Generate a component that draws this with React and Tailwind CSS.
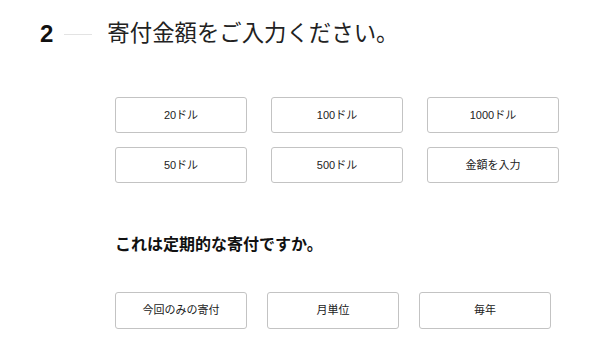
const amounts = ['20ドル', '100ドル', '1000ドル', '50ドル', '500ドル', '金額を入力']
const freqs = ['今回のみの寄付', '月単位', '毎年']

const font = { fontFamily: '"Liberation Sans", "Noto Sans CJK JP", sans-serif' }

function Choice({ label, tall }) {
  return (
    <button
      className={`flex w-[132px] items-center justify-center rounded-[3px] border border-[#c3c3c3] bg-white text-[11px] text-[#222] ${
        tall ? 'h-[37px]' : 'h-[36px]'
      }`}
    >
      {label}
    </button>
  )
}

export default function App() {
  return (
    <div className="min-h-[352px] bg-white px-[40px] pt-[20px]" style={font}>
      <div className="flex h-[28px] items-center">
        <span className="text-[24px] font-bold leading-none text-[#111]">2</span>
        <span className="ml-[11px] h-px w-[28px] bg-[#e3e3e3]" />
        <h1 className="ml-[15px] text-[22.4px] font-normal leading-none text-[#222]">寄付金額をご入力ください。</h1>
      </div>

      <div className="ml-[75px]">
        <div className="mt-[49px] grid grid-cols-[132px_132px_132px] gap-x-[24px] gap-y-[14px]">
          {amounts.map((a) => (
            <Choice key={a} label={a} />
          ))}
        </div>

        <h2 className="mt-[50px] h-[24px] text-[16px] font-semibold leading-[24px] text-[#111]">
          これは定期的な寄付ですか。
        </h2>

        <div className="mt-[35px] flex gap-[20px]">
          {freqs.map((f) => (
            <Choice key={f} label={f} tall />
          ))}
        </div>
      </div>
    </div>
  )
}
